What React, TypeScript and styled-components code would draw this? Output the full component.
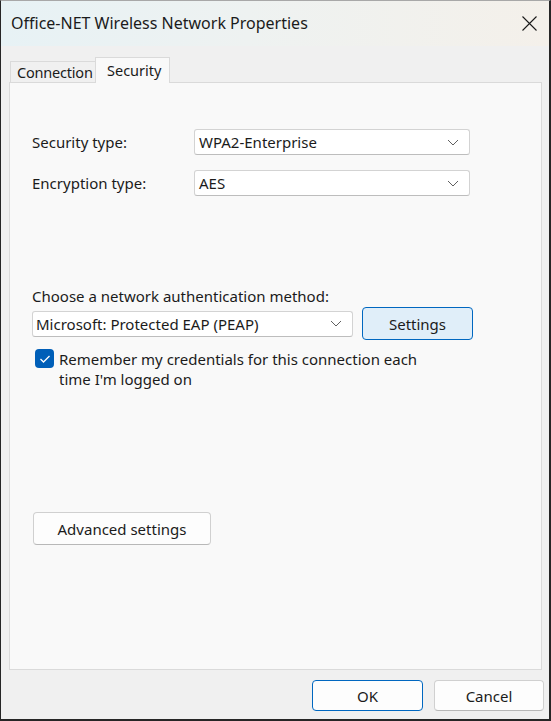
import * as React from "react";
import styled, { createGlobalStyle } from "styled-components";

const GlobalStyle = createGlobalStyle`
  html, body {
    margin: 0;
    padding: 0;
    background: #f0f0f0;
  }
  * {
    box-sizing: border-box;
  }
`;

function Chevron() {
  return (
    <svg width="12" height="7" viewBox="0 0 12 7">
      <path d="M1 1 L6 6 L11 1" fill="none" stroke="#606060" strokeWidth="1" />
    </svg>
  );
}

function CloseIcon() {
  return (
    <svg width="15" height="15" viewBox="0 0 15 15">
      <path d="M0.5 0.5 L14.5 14.5 M14.5 0.5 L0.5 14.5" stroke="#1a1a1a" strokeWidth="1.1" />
    </svg>
  );
}

function CheckMark() {
  return (
    <svg width="12" height="10" viewBox="0 0 12 10">
      <path d="M1.5 5 L4.5 8 L10.5 2" fill="none" stroke="#fff" strokeWidth="1.3" />
    </svg>
  );
}

function App() {
  return (
    <>
      <GlobalStyle />
      <Window>
        <TitleBar>
          <Title>Office-NET Wireless Network Properties</Title>
          <CloseButton>
            <CloseIcon />
          </CloseButton>
        </TitleBar>
        <Body>
          <TabStrip>
            <Tab>Connection</Tab>
            <Tab $active>Security</Tab>
          </TabStrip>
          <Panel>
            <FieldRow>
              <Label>Security type:</Label>
              <Select $width={276}>
                <span>WPA2-Enterprise</span>
                <Chevron />
              </Select>
            </FieldRow>
            <FieldRow $top={15}>
              <Label>Encryption type:</Label>
              <Select $width={276}>
                <span>AES</span>
                <Chevron />
              </Select>
            </FieldRow>
            <AuthLabel>Choose a network authentication method:</AuthLabel>
            <AuthRow>
              <Select $width={321} $pad={3}>
                <span>Microsoft: Protected EAP (PEAP)</span>
                <Chevron />
              </Select>
              <Button $width={111} $primary>
                Settings
              </Button>
            </AuthRow>
            <CheckRow>
              <CheckBox>
                <CheckMark />
              </CheckBox>
              <CheckText>
                Remember my credentials for this connection each
                <br />
                time I'm logged on
              </CheckText>
            </CheckRow>
            <AdvancedWrap>
              <Button $width={178}>Advanced settings</Button>
            </AdvancedWrap>
          </Panel>
          <Footer>
            <Button $width={111} $height={31} $focused>
              OK
            </Button>
            <Button $width={110} $height={31}>
              Cancel
            </Button>
          </Footer>
        </Body>
      </Window>
    </>
  );
}

const Window = styled.div`
  width: 551px;
  height: 721px;
  display: flex;
  flex-direction: column;
  background: #f0f0f0;
  border: 1px solid #262626;
  border-top-color: #a8a8a8;
  border-right-width: 2px;
  border-bottom-width: 2px;
  font-family: "Noto Sans", "Open Sans", sans-serif;
  color: #1b1b1b;
  overflow: hidden;
`;

const TitleBar = styled.div`
  height: 45px;
  flex-shrink: 0;
  display: flex;
  align-items: center;
  justify-content: space-between;
  padding: 0 0 0 10px;
  background: linear-gradient(90deg, #e7f2f5 0%, #eef2f1 45%, #f4f0ea 100%);
`;

const Title = styled.div`
  font-size: 16px;
  padding-bottom: 1px;
`;

const CloseButton = styled.div`
  width: 40px;
  height: 45px;
  display: flex;
  align-items: center;
  justify-content: center;
`;

const Body = styled.div`
  flex: 1;
  display: flex;
  flex-direction: column;
  padding: 0 7px 0 8px;
`;

const TabStrip = styled.div`
  height: 36px;
  display: flex;
  align-items: flex-end;
  padding-left: 1px;
`;

const Tab = styled.div<{ $active?: boolean }>`
  font-size: 14.5px;
  display: flex;
  align-items: center;
  height: ${(p) => (p.$active ? "26px" : "21px")};
  padding: ${(p) => (p.$active ? "0 4px 2px 11px" : "0 0 0 6px")};
  width: ${(p) => (p.$active ? "75px" : "85px")};
  background: ${(p) => (p.$active ? "#f9f9f9" : "#f0f0f0")};
  border: 1px solid #dadada;
  border-bottom: none;
  border-right: ${(p) => (p.$active ? "1px solid #dadada" : "none")};
  margin-bottom: ${(p) => (p.$active ? "-1px" : "0")};
  position: relative;
  z-index: ${(p) => (p.$active ? 1 : 0)};
  white-space: nowrap;
  letter-spacing: ${(p) => (p.$active ? "0" : "-0.2px")};
`;

const Panel = styled.div`
  height: 588px;
  background: #f9f9f9;
  border: 1px solid #dadada;
  padding: 46px 0 0 22px;
  display: flex;
  flex-direction: column;
`;

const FieldRow = styled.div<{ $top?: number }>`
  display: flex;
  align-items: center;
  margin-top: ${(p) => p.$top ?? 0}px;
`;

const Label = styled.div`
  width: 162px;
  font-size: 15px;
`;

const Select = styled.div<{ $width: number; $pad?: number }>`
  width: ${(p) => p.$width}px;
  height: 26px;
  background: #ffffff;
  border: 1px solid #d3d3d3;
  border-bottom-color: #bdbdbd;
  border-radius: 3px;
  display: flex;
  align-items: center;
  justify-content: space-between;
  padding: 0 10px 0 ${(p) => p.$pad ?? 4}px;
  font-size: 15px;
  white-space: nowrap;
`;

const AuthLabel = styled.div`
  font-size: 15px;
  margin-top: 90px;
  line-height: 20px;
`;

const AuthRow = styled.div`
  display: flex;
  align-items: center;
  gap: 9px;
  margin-top: 1px;
`;

const Button = styled.div<{
  $width: number;
  $height?: number;
  $primary?: boolean;
  $focused?: boolean;
}>`
  width: ${(p) => p.$width}px;
  height: ${(p) => p.$height ?? 33}px;
  flex-shrink: 0;
  display: flex;
  align-items: center;
  justify-content: center;
  font-size: 15px;
  border-radius: 4px;
  background: ${(p) => (p.$primary ? "#e0eef9" : "#fdfdfd")};
  border: 1px solid
    ${(p) => (p.$primary || p.$focused ? "#0067c0" : "#d0d0d0")};
  ${(p) => (p.$primary || p.$focused ? "" : "border-bottom-color: #b8b8b8;")}
`;

const CheckRow = styled.div`
  display: flex;
  align-items: flex-start;
  margin-top: 9px;
  padding-left: 3px;
`;

const CheckBox = styled.div`
  width: 19px;
  height: 19px;
  border-radius: 4px;
  background: #005fb8;
  display: flex;
  align-items: center;
  justify-content: center;
  flex-shrink: 0;
`;

const CheckText = styled.div`
  font-size: 15px;
  line-height: 20px;
  margin-left: 5px;
`;

const AdvancedWrap = styled.div`
  margin-top: 123px;
  padding-left: 1px;
`;

const Footer = styled.div`
  flex: 1;
  display: flex;
  justify-content: flex-end;
  align-items: flex-start;
  gap: 11px;
  padding-top: 10px;
  margin-right: -2px;
`;

export default App;
